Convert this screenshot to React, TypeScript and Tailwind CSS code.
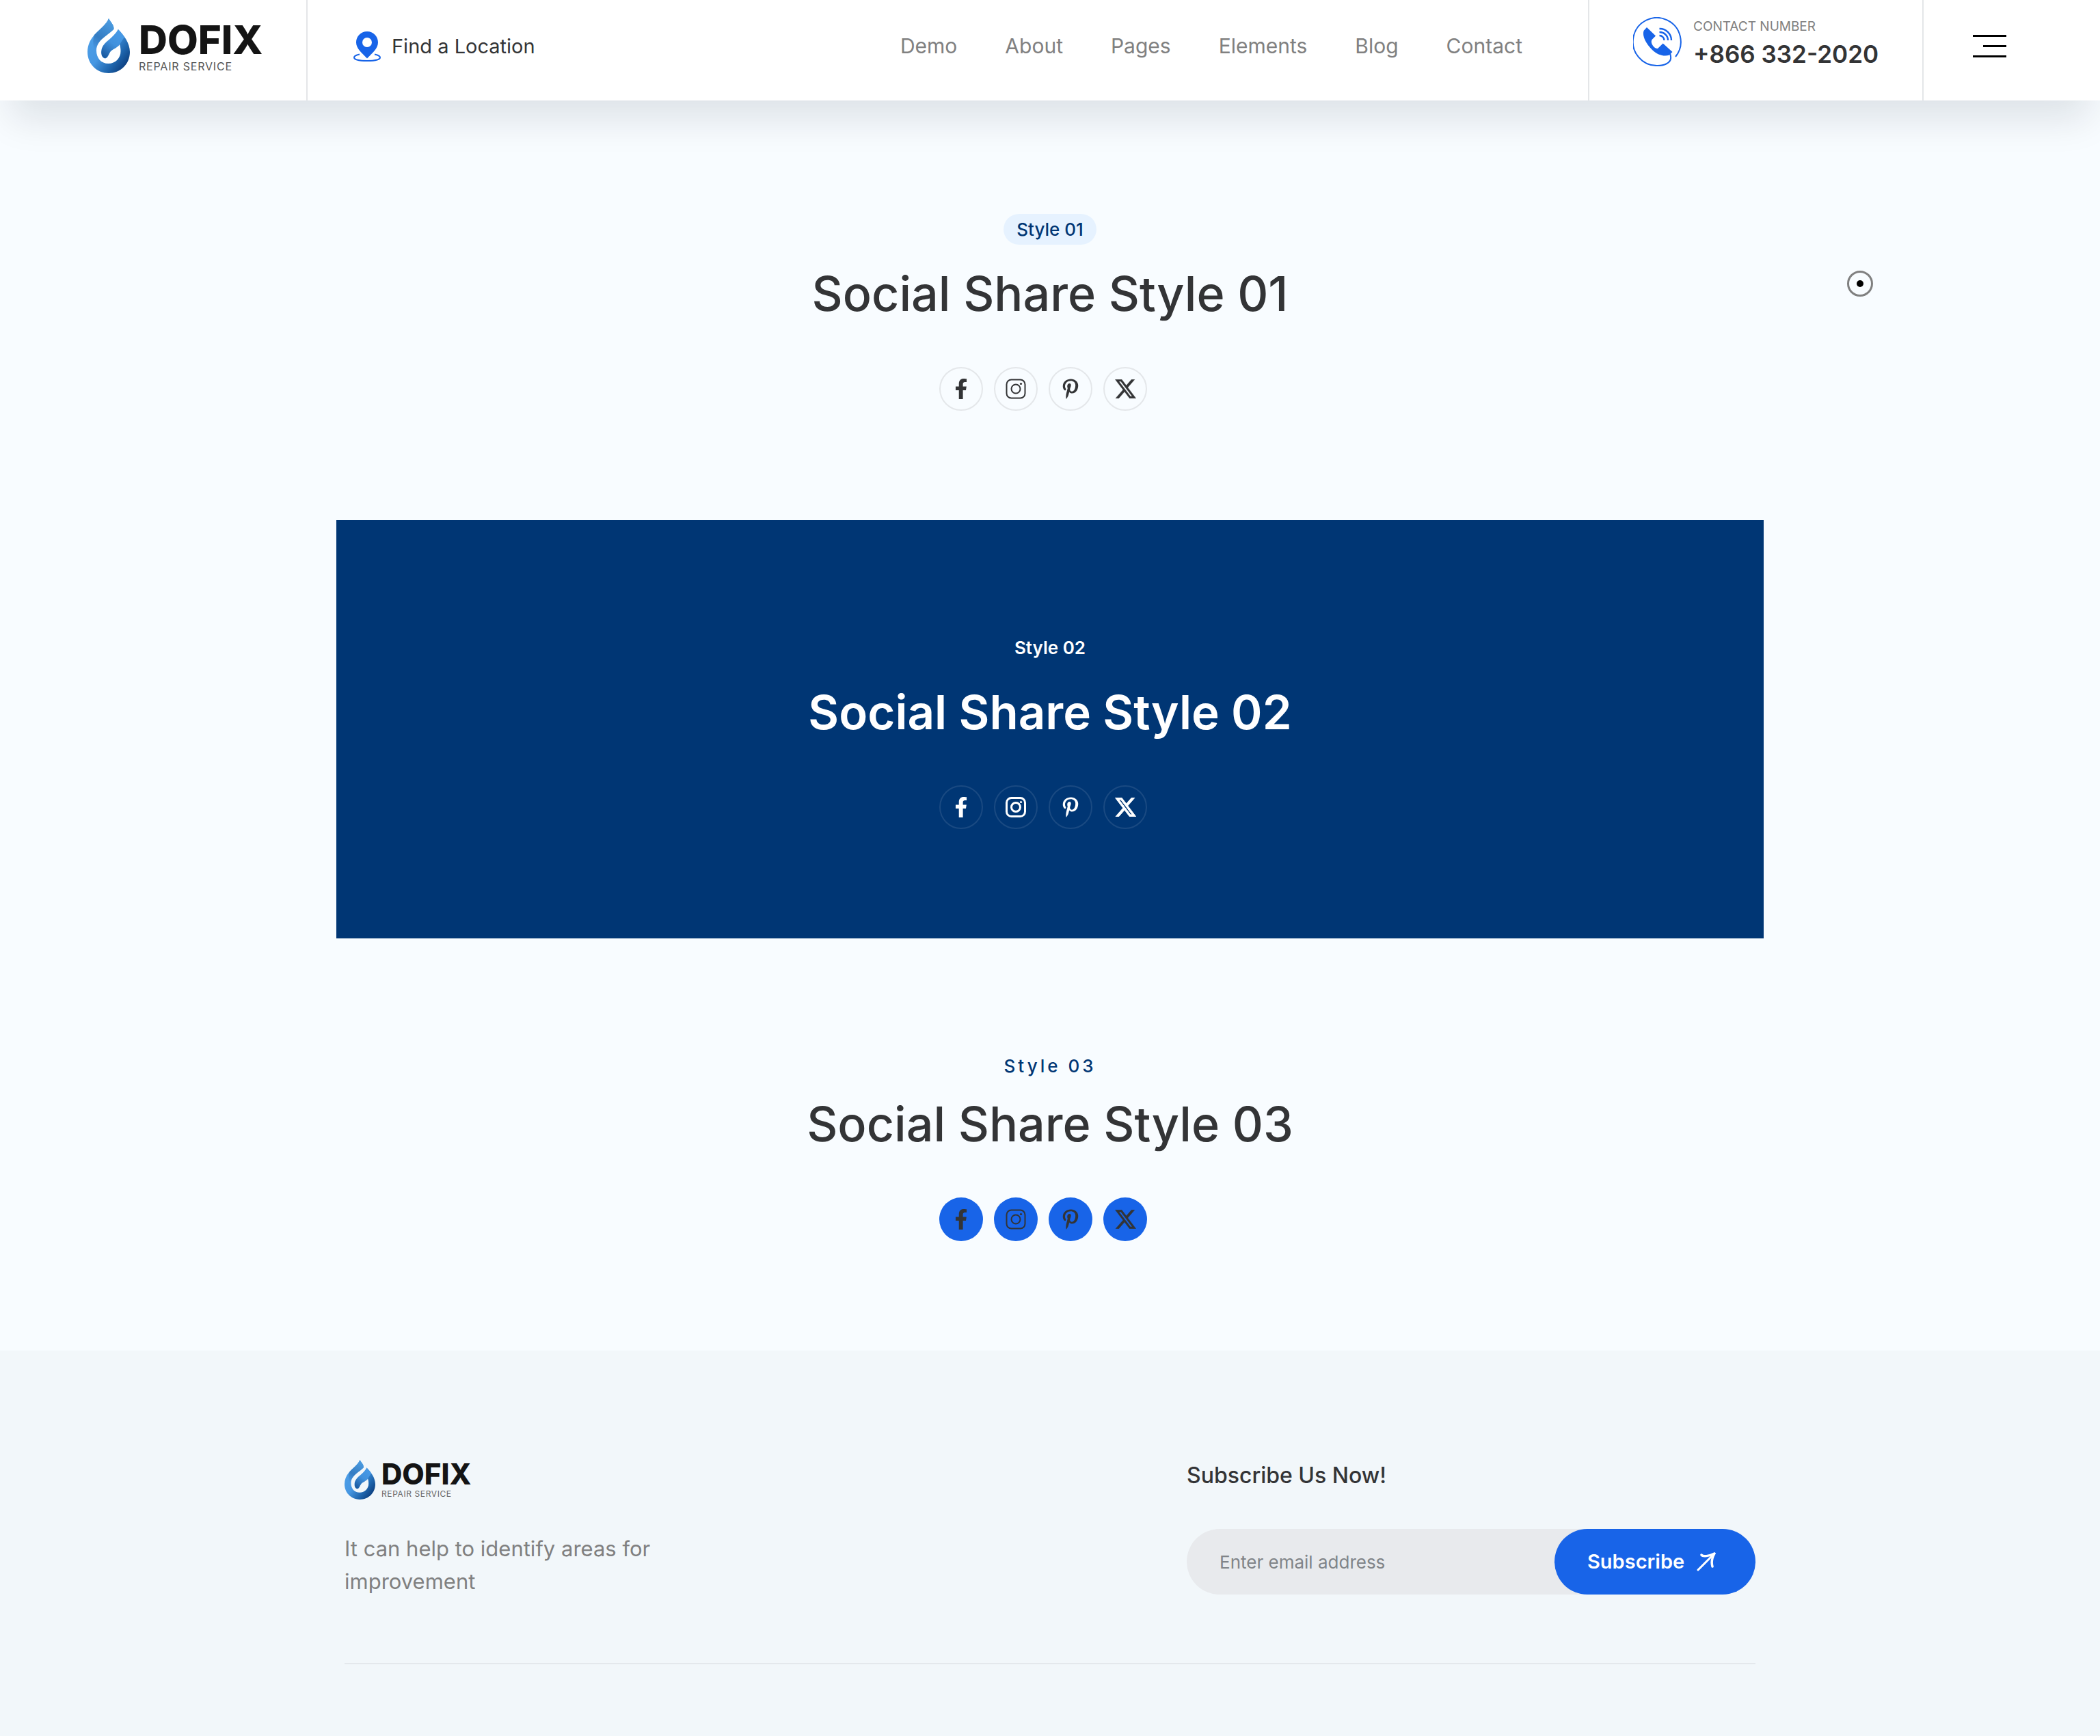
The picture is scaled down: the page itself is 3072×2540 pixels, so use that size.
import type { ReactNode } from "react";
import { FaFacebookF, FaPinterestP } from "react-icons/fa";

const navItems = ["Demo", "About", "Pages", "Elements", "Blog", "Contact"];

function InstagramIcon({ stroke }: { stroke: number }) {
  return (
    <svg viewBox="0 0 30 30" className="size-[30px]" aria-hidden="true" fill="none" stroke="currentColor" strokeWidth={stroke}>
      <rect x="1.500" y="1.500" width="27" height="27" rx="7" />
      <circle cx="15" cy="15" r="6.500" />
      <circle cx="22.500" cy="7.500" r="1.600" fill="currentColor" stroke="none" />
    </svg>
  );
}

function XIcon({ stroke }: { stroke: number }) {
  return (
    <svg viewBox="1 2 22 20" className="h-7 w-[31px]" aria-hidden="true" fill="currentColor" stroke="currentColor" strokeWidth={stroke}>
      <path d="M18.244 2.25h3.308l-7.227 8.26 8.502 11.24H16.17l-5.214-6.817L4.99 21.75H1.68l7.73-8.835L1.254 2.25H8.08l4.713 6.231zm-1.161 17.52h1.833L7.084 4.126H5.117z" />
    </svg>
  );
}

function DropMark({ id, className, gapClass }: { id: string; className: string; gapClass: string }) {
  return (
    <svg viewBox="0 0 62 80" className={className} aria-hidden="true">
      <defs>
        <linearGradient id={`${id}-body`} x1="0.1" y1="0.2" x2="0.85" y2="0.95">
          <stop offset="0" stopColor="#4d9fe8" />
          <stop offset="0.45" stopColor="#4697e2" />
          <stop offset="0.75" stopColor="#1f66ae" />
          <stop offset="1" stopColor="#0b3c7c" />
        </linearGradient>
        <linearGradient id={`${id}-flame`} x1="0.6" y1="0" x2="0.2" y2="1">
          <stop offset="0" stopColor="#4b9be0" />
          <stop offset="0.6" stopColor="#347cc2" />
          <stop offset="1" stopColor="#4a9ae6" />
        </linearGradient>
        <linearGradient id={`${id}-tongue`} x1="0.8" y1="0" x2="0.2" y2="1">
          <stop offset="0" stopColor="#489be8" />
          <stop offset="0.5" stopColor="#4191dd" />
          <stop offset="1" stopColor="#1a5aa0" />
        </linearGradient>
      </defs>
      <path
        d="M31 0C34 6 39 9 38.500 16L44.500 15.500C53 24 62 36 62 49C62 67 48 80 31 80C14 80 0 67 0 49C0 38 5 29 12 22C20 14 28 8 31 0Z"
        fill={`url(#${id}-body)`}
      />
      <path d="M31 0C34 6 39 9 38.500 16C35 24 13 31 13 49C8 43 7 33 10 24C20 14 28 8 31 0Z" fill={`url(#${id}-flame)`} />
      <path d="M44.500 15.500C40 28 24 34 21 44C19 51 21 58 26 58C30 57 31 51 34 48C38 44 44 43 47 38L54 27Z" fill={`url(#${id}-tongue)`} />
      <path
        d="M43 10C36 23 13 29 13 47C13 58 20 66 30.500 66C41 66 48.500 58 48.500 48C48.500 44 48 41 47 38C44 43 38 44 34 48C31 52 30 58 26 58.500C20 58 19 50 21 43.500C25 33 38 29 45 15.500Z"
        className={gapClass}
      />
    </svg>
  );
}

function PinIcon() {
  return (
    <svg viewBox="0 0 40 44" className="h-11 w-10 shrink-0" aria-hidden="true">
      <path d="M9 33.500C4 34.500 1 36 1 38.200C1 41 9 43 20 43C31 43 39 41 39 38.200C39 36 36 34.500 31 33.500" fill="none" stroke="#1864e8" strokeWidth="2" />
      <path
        fillRule="evenodd"
        d="M20 0C11 0 4 7 4 16C4 25 12 31 20 39.500C28 31 36 25 36 16C36 7 29 0 20 0ZM20 9A7 7 0 1 1 20 23A7 7 0 1 1 20 9Z"
        fill="#1864e8"
      />
    </svg>
  );
}

function PhoneIcon() {
  return (
    <svg viewBox="0 0 72 72" className="size-[72px] shrink-0" aria-hidden="true" fill="none" stroke="#1864e8" strokeWidth="2">
      <path d="M62 58A35 35 0 1 0 36 71C46 71 54 67 55 61C55.500 58 55 56 54 53" />
      <path
        d="M20 15L33 27.500L27.500 33C24.500 38 31 46.500 36 46L43.700 38.500L57.500 51L53 55.500C46 58 36 56 28 48C19 39 13 28 15.500 20Z"
        fill="#1864e8"
        stroke="none"
      />
      <path d="M38.500 17A17 17 0 0 1 56 34M38.500 22A12 12 0 0 1 51 34M38.500 27A7 7 0 0 1 45.500 34" strokeWidth="2.400" />
    </svg>
  );
}

function ArrowIcon() {
  return (
    <svg viewBox="0 0 28 28" className="size-7" aria-hidden="true" fill="none" stroke="currentColor" strokeLinecap="round" strokeLinejoin="round">
      <path d="M2 26L26 2" strokeWidth="3" />
      <path d="M7 4C9 7 18 6 26 2C22 9 21 14 23 21" strokeWidth="3.500" />
    </svg>
  );
}

type Tone = "light" | "dark" | "solid";

const circleStyles: Record<Tone, string> = {
  light: "border-2 border-[#e4e7ea] text-[#333436]",
  dark: "border-2 border-[#1a4a82] text-white",
  solid: "bg-[#1864e8] text-[#333436]",
};

function SocialLinks({ tone }: { tone: Tone }) {
  const bold = tone === "dark";
  const socials: { label: string; icon: ReactNode }[] = [
    { label: "Facebook", icon: <FaFacebookF className="size-[30px]" /> },
    { label: "Instagram", icon: <InstagramIcon stroke={bold ? 3 : 2} /> },
    { label: "Pinterest", icon: <FaPinterestP className="size-[30px]" /> },
    { label: "X", icon: <XIcon stroke={bold ? 0.7 : 0.3} /> },
  ];
  return (
    <ul className="flex gap-4 pr-5">
      {socials.map(({ label, icon }) => (
        <li key={label}>
          <a href="#" aria-label={label} className={`flex size-16 items-center justify-center rounded-full ${circleStyles[tone]}`}>
            {icon}
          </a>
        </li>
      ))}
    </ul>
  );
}

export default function App() {
  return (
    <div className="relative flex min-h-screen flex-col bg-[#f8fcff] font-[Inter,sans-serif] text-[#333436]">
      <header className="relative flex h-[147px] bg-white shadow-[0_42px_56px_-15px_rgba(8,16,40,0.11)]">
        <a href="#" aria-label="Dofix Repair Service" className="flex w-[450px] items-start gap-[13px] border-r-2 border-[#e4e6e8] pt-[27px] pl-32">
          <DropMark id="top" className="h-20 w-[62px]" gapClass="fill-white" />
          <span className="flex flex-col gap-[2px] pt-0.5">
            <span className="text-[58px] leading-none font-extrabold text-[#141414]">DOFIX</span>
            <span className="text-base leading-none tracking-wider text-[#555]">REPAIR SERVICE</span>
          </span>
        </a>
        <a href="#" className="flex items-center gap-4 pb-3 pl-[67px] text-[29px]">
          <PinIcon />
          Find a Location
        </a>
        <nav className="ml-auto flex items-center gap-[70px] pr-24 pb-3 text-[30px] text-[#808080]">
          {navItems.map((item) => (
            <a key={item} href="#">
              {item}
            </a>
          ))}
        </nav>
        <div className="flex w-[491px] items-start gap-4 border-x-2 border-[#e4e6e8] pt-[25px] pl-16">
          <PhoneIcon />
          <div>
            <p className="text-[19px] leading-7 text-[#808080]">CONTACT NUMBER</p>
            <a href="tel:+8663322020" className="block text-[35px] leading-[52px] font-semibold">
              +866 332-2020
            </a>
          </div>
        </div>
        <div className="flex w-[258px] items-center pb-3 pl-[72px]">
          <button type="button" aria-label="Open menu" className="flex w-[49px] flex-col items-end gap-3">
            <span className="h-[3px] w-full bg-black" />
            <span className="h-[3px] w-[34px] bg-black" />
            <span className="h-[3px] w-full bg-black" />
          </button>
        </div>
      </header>

      <main className="flex flex-col items-center pt-0.5">
        <section className="flex w-full flex-col items-center pt-[164px] pb-40">
          <span className="flex h-[45px] items-center rounded-full bg-[#e6f2ff] px-[19px] text-[26px] font-medium text-[#003674]">Style 01</span>
          <h2 className="mt-7 mb-[63px] text-[70px] leading-[88px] font-medium">Social Share Style 01</h2>
          <SocialLinks tone="light" />
        </section>

        <section className="flex w-full max-w-[2088px] flex-col items-center bg-[#003674] pt-[164px] pb-40 text-white">
          <span className="flex h-[45px] items-center text-[26px] font-semibold">Style 02</span>
          <h2 className="mt-7 mb-[63px] text-[69px] leading-[88px] font-semibold">Social Share Style 02</h2>
          <SocialLinks tone="dark" />
        </section>

        <section className="flex w-full flex-col items-center pt-[164px] pb-40">
          <span className="flex h-[45px] items-center text-[26px] font-medium tracking-[4px] text-[#003674]">Style 03</span>
          <h2 className="mt-[19px] mb-[63px] text-[70px] leading-[88px] font-medium">Social Share Style 03</h2>
          <SocialLinks tone="solid" />
        </section>
      </main>

      <footer className="flex-1 bg-[#f2f7fa] pt-40">
        <div className="mx-auto flex w-full max-w-[2064px] justify-between border-b-2 border-[#e4e8ec] pb-[95px]">
          <div className="w-[520px]">
            <a href="#" aria-label="Dofix Repair Service" className="flex items-start gap-[9px]">
              <DropMark id="foot" className="h-[58px] w-[45px]" gapClass="fill-[#f2f7fa]" />
              <span className="flex flex-col gap-[2px]">
                <span className="text-[42px] leading-none font-extrabold text-[#141414]">DOFIX</span>
                <span className="text-xs leading-none tracking-wider text-[#666]">REPAIR SERVICE</span>
              </span>
            </a>
            <p className="mt-12 text-[31px] leading-[48px] text-[#808080]">It can help to identify areas for improvement</p>
          </div>
          <form className="w-[832px]" onSubmit={(e) => e.preventDefault()}>
            <label htmlFor="email" className="block text-[32px] leading-[45px] font-medium">
              Subscribe Us Now!
            </label>
            <div className="mt-14 flex h-24 rounded-full bg-[#e8eaed]">
              <input
                id="email"
                type="email"
                placeholder="Enter email address"
                className="min-w-0 flex-1 bg-transparent pl-12 text-[26px] outline-none placeholder:text-[#808488]"
              />
              <button type="submit" className="flex w-[294px] items-center gap-[18px] rounded-full bg-[#1864e8] pl-12 text-[29px] font-semibold text-white">
                Subscribe
                <ArrowIcon />
              </button>
            </div>
          </form>
        </div>
      </footer>

      <div aria-hidden="true" className="pointer-events-none absolute top-[396px] right-[332px] flex size-[38px] items-center justify-center rounded-full border-3 border-[#808080]">
        <span className="size-2.5 rounded-full bg-black" />
      </div>
    </div>
  );
}
